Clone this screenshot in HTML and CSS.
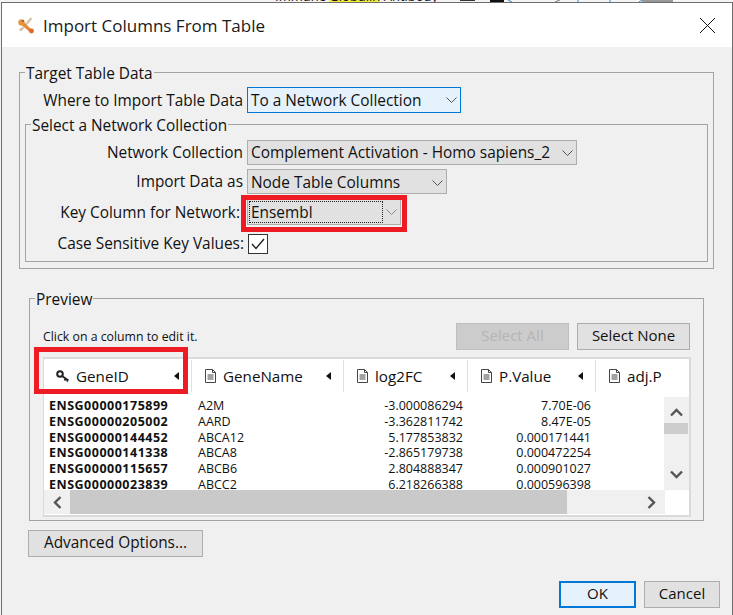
FILE: index.html
```html
<!DOCTYPE html>
<html lang="en">
<head>
    <meta charset="UTF-8">
    <meta name="viewport" content="width=device-width, initial-scale=1.0">
    <title>Import Columns From Table</title>
    <link rel="stylesheet" href="styles.css">
</head>
<body>

<div class="backdrop">
    <span class="backdrop-text">Immune <span class="backdrop-mark">Globulin</span> Antibody</span>
    <svg class="backdrop-marks" width="733" height="2" viewBox="0 0 733 2">
        <path d="M460 0.5 H475" stroke="#333"/>
        <path d="M490 1 H504" stroke="#111" stroke-width="2"/>
        <path d="M508 0 L512 2 M578 0 V2 M610 0 V2 M639 2 L642 0" stroke="#3c86c8"/>
        <path d="M555 2 L560 0" stroke="#777"/>
        <path d="M642 1 H673" stroke="#999" stroke-width="2"/>
    </svg>
</div>

<div class="window">
    <div class="titlebar">
        <svg class="app-icon" width="18" height="18" viewBox="0 0 18 18">
            <path d="M14.5 2 L5 13" stroke="#d9c8ae" stroke-width="2.6" fill="none"/>
            <path d="M4 6 L14.5 15.5" stroke="#e58a38" stroke-width="3.2" fill="none"/>
            <circle cx="4.5" cy="6.5" r="3.2" fill="#e8943e"/>
            <circle cx="14.5" cy="15" r="2.4" fill="#e0662a"/>
            <circle cx="4" cy="13.5" r="1.6" fill="#cdbda6"/>
            <circle cx="6" cy="5" r="1" fill="#8a5a2c"/>
        </svg>
        <span class="title">Import Columns From Table</span>
        <svg class="close" width="15" height="15" viewBox="0 0 15 15">
            <path d="M0 0 L15 15 M15 0 L0 15" stroke="#111" stroke-width="1" fill="none"/>
        </svg>
    </div>

    <div class="content">
        <fieldset class="group group-target">
            <legend>Target Table Data</legend>
            <div class="form-row form-row-outer">
                <label class="form-label">Where to Import Table Data</label>
                <div class="select select-focus select-where">
                    <span>To a Network Collection</span>
                    <svg class="chevron" width="11" height="6" viewBox="0 0 11 6"><path d="M0.5 0.5 L5.5 5.5 L10.5 0.5" stroke="#555" fill="none"/></svg>
                </div>
            </div>

            <fieldset class="group group-inner">
                <legend>Select a Network Collection</legend>
                <div class="form-row form-row-first">
                    <label class="form-label">Network Collection</label>
                    <div class="select select-collection">
                        <span>Complement Activation - Homo sapiens_2</span>
                        <svg class="chevron" width="11" height="6" viewBox="0 0 11 6"><path d="M0.5 0.5 L5.5 5.5 L10.5 0.5" stroke="#555" fill="none"/></svg>
                    </div>
                </div>
                <div class="form-row form-row-low">
                    <label class="form-label">Import Data as</label>
                    <div class="select select-import">
                        <span>Node Table Columns</span>
                        <svg class="chevron" width="11" height="6" viewBox="0 0 11 6"><path d="M0.5 0.5 L5.5 5.5 L10.5 0.5" stroke="#555" fill="none"/></svg>
                    </div>
                </div>
                <div class="form-row form-row-key form-row-low">
                    <label class="form-label form-label-key">Key Column for Network:</label>
                    <div class="select select-key red-box">
                        <span class="dotted">Ensembl</span>
                        <svg class="chevron" width="11" height="6" viewBox="0 0 11 6"><path d="M0.5 0.5 L5.5 5.5 L10.5 0.5" stroke="#888" fill="none"/></svg>
                    </div>
                </div>
                <div class="form-row form-row-check">
                    <label class="form-label form-label-check">Case Sensitive Key Values:</label>
                    <div class="checkbox">
                        <svg width="14" height="12" viewBox="0 0 14 12"><path d="M1 6 L5 10.5 L13 1" stroke="#222" stroke-width="1.4" fill="none"/></svg>
                    </div>
                </div>
            </fieldset>
        </fieldset>

        <fieldset class="group group-preview">
            <legend>Preview</legend>
            <div class="preview-top">
                <span class="hint">Click on a column to edit it.</span>
                <button class="btn btn-disabled btn-select">Select All</button>
                <button class="btn btn-select">Select None</button>
            </div>

            <div class="table">
                <div class="table-head cols">
                    <div class="head-cell head-cell-key red-box-head">
                        <svg class="key-icon" width="14" height="12" viewBox="0 0 14 12">
                            <circle cx="4" cy="4" r="2.8" stroke="#222" stroke-width="2" fill="none"/>
                            <path d="M6 6 L12.5 10.5 M9.5 8.7 L8.5 10.5 M11.5 10 L10.8 11.5" stroke="#222" stroke-width="1.8" fill="none"/>
                        </svg>
                        <span>GeneID</span>
                        <i class="sort"></i>
                    </div>
                    <div class="head-cell">
                        <svg class="doc-icon" width="11" height="14" viewBox="0 0 11 14"><path d="M0.5 0.5 H7.5 L10.5 3.5 V13.5 H0.5 Z M7.5 0.5 V3.5 H10.5 M2.5 6 H8.5 M2.5 8 H8.5 M2.5 10 H8.5" stroke="#444" fill="none"/></svg>
                        <span>GeneName</span>
                        <i class="sort"></i>
                    </div>
                    <div class="head-cell">
                        <svg class="doc-icon" width="11" height="14" viewBox="0 0 11 14"><path d="M0.5 0.5 H7.5 L10.5 3.5 V13.5 H0.5 Z M7.5 0.5 V3.5 H10.5 M2.5 6 H8.5 M2.5 8 H8.5 M2.5 10 H8.5" stroke="#444" fill="none"/></svg>
                        <span>log2FC</span>
                        <i class="sort"></i>
                    </div>
                    <div class="head-cell">
                        <svg class="doc-icon" width="11" height="14" viewBox="0 0 11 14"><path d="M0.5 0.5 H7.5 L10.5 3.5 V13.5 H0.5 Z M7.5 0.5 V3.5 H10.5 M2.5 6 H8.5 M2.5 8 H8.5 M2.5 10 H8.5" stroke="#444" fill="none"/></svg>
                        <span>P.Value</span>
                        <i class="sort"></i>
                    </div>
                    <div class="head-cell head-cell-last">
                        <svg class="doc-icon" width="11" height="14" viewBox="0 0 11 14"><path d="M0.5 0.5 H7.5 L10.5 3.5 V13.5 H0.5 Z M7.5 0.5 V3.5 H10.5 M2.5 6 H8.5 M2.5 8 H8.5 M2.5 10 H8.5" stroke="#444" fill="none"/></svg>
                        <span>adj.P</span>
                    </div>
                </div>

                <div class="table-body">
                    <div class="rows">
                        <div class="row cols"><b>ENSG00000175899</b><span>A2M</span><span class="num">-3.000086294</span><span class="num">7.70E-06</span></div>
                        <div class="row cols"><b>ENSG00000205002</b><span>AARD</span><span class="num">-3.362811742</span><span class="num">8.47E-05</span></div>
                        <div class="row cols"><b>ENSG00000144452</b><span>ABCA12</span><span class="num">5.177853832</span><span class="num">0.000171441</span></div>
                        <div class="row cols"><b>ENSG00000141338</b><span>ABCA8</span><span class="num">-2.865179738</span><span class="num">0.000472254</span></div>
                        <div class="row cols"><b>ENSG00000115657</b><span>ABCB6</span><span class="num">2.804888347</span><span class="num">0.000901027</span></div>
                        <div class="row cols"><b>ENSG00000023839</b><span>ABCC2</span><span class="num">6.218266388</span><span class="num">0.000596398</span></div>
                    </div>
                    <div class="vscroll">
                        <svg width="13" height="9" viewBox="0 0 13 9"><path d="M1 7.5 L6.5 2 L12 7.5" stroke="#555" stroke-width="2.4" fill="none"/></svg>
                        <div class="vthumb"></div>
                        <svg class="vdown" width="13" height="9" viewBox="0 0 13 9"><path d="M1 1.5 L6.5 7 L12 1.5" stroke="#555" stroke-width="2.4" fill="none"/></svg>
                    </div>
                </div>

                <div class="hscroll">
                    <div class="hbtn"><svg width="9" height="13" viewBox="0 0 9 13"><path d="M7.5 1 L2 6.5 L7.5 12" stroke="#555" stroke-width="2.4" fill="none"/></svg></div>
                    <div class="hthumb"></div>
                    <div class="htrack"><svg width="9" height="13" viewBox="0 0 9 13"><path d="M1.5 1 L7 6.5 L1.5 12" stroke="#555" stroke-width="2.4" fill="none"/></svg></div>
                </div>
            </div>
        </fieldset>

        <button class="btn btn-advanced">Advanced Options...</button>

        <div class="footer">
            <button class="btn btn-ok">OK</button>
            <button class="btn btn-cancel">Cancel</button>
        </div>
    </div>
</div>

</body>
</html>
```

FILE: styles.css
```css
* {
    box-sizing: border-box;
}

body {
    margin: 0;
    width: 733px;
    height: 615px;
    overflow: hidden;
    background-color: #f4f4f4;
    font-family: "Open Sans", "Noto Sans", sans-serif;
    font-size: 15.4px;
    color: #111;
}

/* sliver of the window behind the dialog */
.backdrop {
    position: relative;
    height: 2px;
    overflow: hidden;
    padding-left: 275px;
    line-height: 2px;
    font-size: 13px;
}

.backdrop-text {
    position: relative;
    top: -5px;
}

.backdrop-mark {
    background-color: #f5ef3a;
}

.backdrop-marks {
    position: absolute;
    left: 0;
    top: 0;
}

.window {
    width: 732px;
    height: 613px;
    margin-left: 1px;
    border: 1px solid #6e6e6e;
    border-bottom: none;
    background-color: #f0f0f0;
}

.titlebar {
    display: flex;
    align-items: center;
    height: 44px;
    padding: 0 17px 0 15px;
    background-color: #fff;
}

.app-icon {
    margin-right: 8px;
}

.title {
    flex: 1;
    font-size: 17px;
    color: #1a1a1a;
}

.content {
    padding-top: 15px;
}

.group {
    margin: 0;
    padding: 0;
    border: 1px solid #a3a3a3;
    min-width: 0;
}

.group legend {
    margin-left: 0;
    padding: 0 1px;
    height: 20px;
    line-height: 24px;
}

.group-target {
    width: 695px;
    height: 207px;
    margin-left: 17px;
    padding: 0 5px;
}

.group-inner {
    height: 148px;
    margin-top: 1px;
}

.group .group-inner legend {
    margin-left: 5px;
}

.group-preview {
    width: 675px;
    height: 233px;
    margin: 19px 0 0 27px;
    padding: 0 12px 0 13px;
}

.group-preview legend {
    margin-left: -8px;
}

.form-row {
    display: flex;
    align-items: center;
    margin-top: 4px;
}

.form-row-outer {
    margin-top: 5px;
}

.form-row-first {
    margin-top: 6px;
}

.form-row-key {
    margin-top: 5px;
}

.form-row-check {
    margin-top: 8px;
}

.form-row-low .select {
    padding-top: 2px;
}

.form-label {
    width: 217px;
    margin-right: 4px;
    text-align: right;
    white-space: nowrap;
}

.form-row-outer .form-label {
    width: 218px;
}

.form-label-key {
    position: relative;
    left: -3px;
}

.form-label-check {
    margin-right: 5px;
    position: relative;
    left: 1px;
}

.select {
    display: flex;
    align-items: center;
    justify-content: space-between;
    height: 25px;
    padding: 0 3px 0 3px;
    border: 1px solid #adadad;
    background-color: #e1e1e1;
    white-space: nowrap;
}

.select-focus {
    height: 26px;
    border-color: #0078d7;
    background-color: #e5f1fb;
}

.select-where {
    width: 214px;
}

.select-collection {
    width: 330px;
}

.select-import {
    width: 200px;
}

.form-row-low .select-key {
    width: 154px;
    height: 26px;
    padding: 0 3px 0 1px;
    position: relative;
}

.red-box::after {
    content: "";
    position: absolute;
    left: -7px;
    right: -7px;
    top: -5px;
    bottom: -8px;
    border: 5px solid #ed1c24;
}

.dotted {
    width: 134px;
    height: 22px;
    line-height: 22px;
    padding-left: 1px;
    border: 1px dotted #222;
}

.chevron {
    flex-shrink: 0;
}

.checkbox {
    display: flex;
    align-items: center;
    justify-content: center;
    width: 20px;
    height: 20px;
    border: 1px solid #333;
    background-color: #fff;
}

.preview-top {
    display: flex;
    align-items: center;
    gap: 8px;
    height: 27px;
    margin-top: 15px;
    padding-right: 1px;
}

.hint {
    flex: 1;
    font-size: 12.3px;
}

.btn {
    border: 1px solid #adadad;
    background-color: #e1e1e1;
    font-family: inherit;
    font-size: 15px;
    color: #111;
    padding: 0 0 4px;
    height: 27px;
}

.btn-select {
    width: 113px;
}

.btn-disabled {
    background-color: #cccccc;
    border-color: #bfbfbf;
    color: #b4b4b4;
}

.table {
    width: 648px;
    height: 160px;
    margin-top: 7px;
    border: 2px solid #dadada;
    border-left-width: 1px;
    border-bottom-width: 2px;
    background-color: #fff;
}

.cols {
    display: grid;
    grid-template-columns: 148px 152px 124px 128px;
}

.table-head {
    grid-template-columns: 148px 152px 124px 128px 1fr;
    height: 33px;
}

.head-cell {
    display: flex;
    align-items: center;
    position: relative;
    padding: 0 0 0 13px;
    border-right: 1px solid #e0e0e0;
    margin-top: 1px;
    font-size: 15.2px;
    white-space: nowrap;
}

.head-cell-key {
    padding-left: 12px;
}

.head-cell-last {
    border-right: none;
    overflow: hidden;
}

.red-box-head::after {
    content: "";
    position: absolute;
    left: -10px;
    right: 3px;
    top: -13px;
    bottom: -2px;
    border: 5px solid #ed1c24;
}

.head-cell .sort {
    margin-left: auto;
    margin-right: 12px;
    width: 0;
    height: 0;
    border-top: 4px solid transparent;
    border-bottom: 4px solid transparent;
    border-right: 5px solid #111;
}

.key-icon {
    margin-right: 6px;
}

.doc-icon {
    margin-right: 7px;
}

.table-body {
    display: flex;
    height: 93px;
    margin-top: 5px;
}

.rows {
    width: 621px;
    padding-top: 1px;
    overflow: hidden;
}

.row {
    height: 15.8px;
    line-height: 15.8px;
    font-size: 12.5px;
    white-space: nowrap;
}

.row b {
    padding-left: 5px;
    letter-spacing: 0.5px;
}

.row span {
    padding-left: 6px;
}

.row .num {
    text-align: right;
    padding-right: 5px;
}

.vscroll {
    display: flex;
    flex-direction: column;
    align-items: center;
    width: 25px;
    padding-top: 11px;
    background-color: #f0f0f0;
}

.vthumb {
    width: 24px;
    height: 11px;
    margin: 6px 1px 0 0;
    align-self: flex-start;
    background-color: #cdcdcd;
}

.vdown {
    margin-top: auto;
    margin-bottom: 11px;
}

.hscroll {
    display: flex;
    width: 621px;
    height: 24px;
}

.hbtn {
    display: flex;
    align-items: center;
    justify-content: center;
    width: 26px;
    background-color: #f0f0f0;
}

.hthumb {
    width: 497px;
    background-color: #c9c9c9;
}

.htrack {
    display: flex;
    align-items: center;
    justify-content: flex-end;
    padding-right: 9px;
    flex: 1;
    background-color: #f0f0f0;
}

.btn-advanced {
    display: block;
    width: 175px;
    margin: 9px 0 0 26px;
    padding-bottom: 2px;
    font-size: 15.4px;
}

.footer {
    display: flex;
    justify-content: flex-end;
    gap: 8px;
    margin-top: 24px;
    padding-right: 12px;
}

.btn-ok {
    width: 77px;
    border: 2px solid #0078d7;
    background-color: #e5f1fb;
}

.btn-cancel {
    width: 76px;
}
```
